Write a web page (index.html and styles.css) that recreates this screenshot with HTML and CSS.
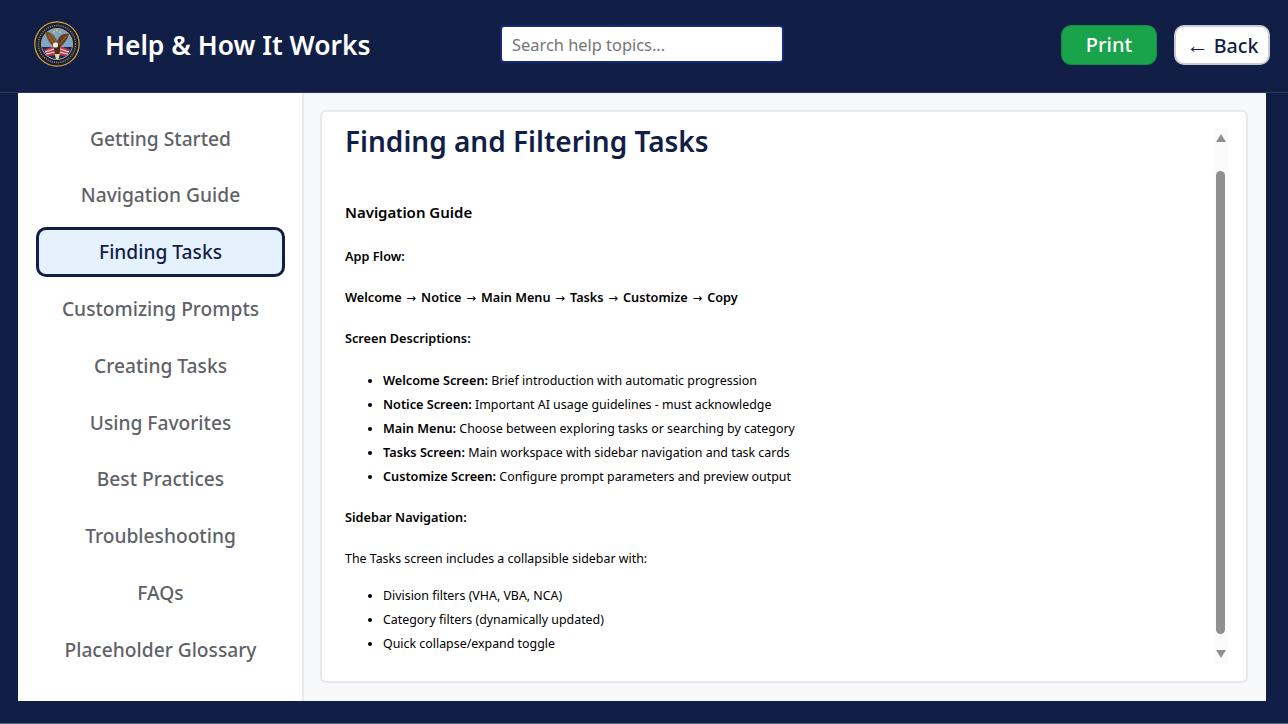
FILE: index.html
```html
<!DOCTYPE html>
<html lang="en">
<head>
    <meta charset="UTF-8">
    <meta name="viewport" content="width=device-width, initial-scale=1.0">
    <title>Help &amp; How It Works</title>
    <link rel="stylesheet" href="styles.css">
</head>
<body>

    <!-- top bar -->
    <header class="topbar">
        <div class="brand">
            <svg class="seal" viewBox="0 0 46 46" width="46" height="46" aria-hidden="true">
                <circle cx="23" cy="23" r="22.8" fill="#d8a62f"/>
                <circle cx="23" cy="23" r="21.6" fill="#1b2036"/>
                <circle cx="23" cy="23" r="18.5" fill="none" stroke="#8b8670" stroke-width="1.4" stroke-dasharray="1.2 1"/>
                <circle cx="23" cy="23" r="16" fill="#c9a24a"/>
                <circle cx="23" cy="23" r="15.4" fill="#7ba6c8"/>
                <!-- lower field -->
                <path d="M8 26 L38 26 A15.400 15.400 0 0 1 8 26Z" fill="#1f2a5c"/>
                <!-- flags -->
                <path d="M10 29 L20 25 L21 34 L14 35Z" fill="#c23b48"/>
                <path d="M11 31 L20 28 M12 33 L21 31" stroke="#eee" stroke-width="1"/>
                <path d="M36 29 L26 25 L25 34 L32 35Z" fill="#c23b48"/>
                <path d="M35 31 L26 28 M34 33 L25 31" stroke="#eee" stroke-width="1"/>
                <!-- wings -->
                <path d="M21 27 C17 24 13 19 11 11 C15 10 20 13 23 20Z" fill="#7a4a26"/>
                <path d="M25 27 C29 24 33 20 35 13 C31 12 26 13 23 20Z" fill="#6a3d1e"/>
                <path d="M14 14 L20 23 M17 13 L22 21 M32 15 L26 23" stroke="#a36f3d" stroke-width="0.8"/>
                <!-- body and head -->
                <path d="M20 24 L26 24 L25.500 33 L21 33Z" fill="#4a2c17"/>
                <circle cx="21.500" cy="24" r="2.600" fill="#f0ece0"/>
                <path d="M20.500 33 L26 33 L24.500 38 L22 38Z" fill="#e6d6a4"/>
                <!-- stars -->
                <circle cx="23" cy="9.500" r="0.900" fill="#e8c544"/>
                <circle cx="20" cy="11" r="0.900" fill="#e8c544"/>
                <circle cx="26" cy="11" r="0.900" fill="#e8c544"/>
            </svg>
            <h1>Help &amp; How It Works</h1>
        </div>
        <input class="search" type="text" placeholder="Search help topics...">
        <div class="actions">
            <button class="btn print-btn" type="button">Print</button>
            <button class="btn back-btn" type="button"><span class="back-arrow">←</span> Back</button>
        </div>
    </header>

    <main class="layout">
        <!-- help topics -->
        <nav class="sidebar">
            <a class="topic" href="#">Getting Started</a>
            <a class="topic" href="#">Navigation Guide</a>
            <a class="topic active" href="#">Finding Tasks</a>
            <a class="topic" href="#">Customizing Prompts</a>
            <a class="topic" href="#">Creating Tasks</a>
            <a class="topic" href="#">Using Favorites</a>
            <a class="topic" href="#">Best Practices</a>
            <a class="topic" href="#">Troubleshooting</a>
            <a class="topic" href="#">FAQs</a>
            <a class="topic" href="#">Placeholder Glossary</a>
        </nav>

        <section class="content">
            <div class="card">
                <div class="article">
                    <h2>Finding and Filtering Tasks</h2>
                    <h3>Navigation Guide</h3>
                    <p><strong>App Flow:</strong></p>
                    <p><strong>Welcome <span class="flow-arrow">→</span> Notice <span class="flow-arrow">→</span> Main Menu <span class="flow-arrow">→</span> Tasks <span class="flow-arrow">→</span> Customize <span class="flow-arrow">→</span> Copy</strong></p>
                    <p><strong>Screen Descriptions:</strong></p>
                    <ul class="screens">
                        <li><strong>Welcome Screen:</strong> Brief introduction with automatic progression</li>
                        <li><strong>Notice Screen:</strong> Important AI usage guidelines - must acknowledge</li>
                        <li><strong>Main Menu:</strong> Choose between exploring tasks or searching by category</li>
                        <li><strong>Tasks Screen:</strong> Main workspace with sidebar navigation and task cards</li>
                        <li><strong>Customize Screen:</strong> Configure prompt parameters and preview output</li>
                    </ul>
                    <p><strong>Sidebar Navigation:</strong></p>
                    <p>The Tasks screen includes a collapsible sidebar with:</p>
                    <ul>
                        <li>Division filters (VHA, VBA, NCA)</li>
                        <li>Category filters (dynamically updated)</li>
                        <li>Quick collapse/expand toggle</li>
                    </ul>
                </div>
                <div class="scrollbar" aria-hidden="true">
                    <span class="scroll-up"></span>
                    <span class="thumb"></span>
                    <span class="scroll-down"></span>
                </div>
            </div>
        </section>
    </main>

</body>
</html>
```

FILE: styles.css
```css
/* General styling */
* {
    box-sizing: border-box;
}

body {
    margin: 0;
    height: 724px;
    overflow: hidden;
    background-color: #111f47;
    font-family: "Noto Sans", "Open Sans", sans-serif;
    border-bottom: 1px solid #5b6684;
}

/* Top bar */
.topbar {
    display: grid;
    grid-template-columns: 466px 284px 1fr;
    align-items: center;
    height: 93px;
    padding: 0 18px 1px 34px;
    border-bottom: 1px solid #2c3858;
}

.brand {
    display: flex;
    align-items: center;
    gap: 25px;
}

.seal {
    display: block;
    margin-top: -4px;
}

.brand h1 {
    margin: 0;
    color: #fff;
    font-size: 26.4px;
    font-weight: 600;
    line-height: 1.2;
}

.search {
    width: 284px;
    height: 38px;
    margin-top: -3px;
    padding: 0 10px;
    border: 2px solid #16297a;
    border-radius: 4px;
    background-color: #fff;
    font-family: inherit;
    font-size: 16.4px;
    outline: none;
}

.search::placeholder {
    color: #757575;
    opacity: 1;
}

.actions {
    display: flex;
    justify-content: flex-end;
    gap: 17px;
    margin-top: -2px;
}

.btn {
    height: 40px;
    border-radius: 10px;
    font-family: inherit;
    font-size: 20px;
    font-weight: 500;
    line-height: 1;
    cursor: pointer;
}

.print-btn {
    width: 96px;
    border: 1px solid #178a45;
    background-color: #19a44c;
    color: #fff;
}

.back-btn {
    width: 96px;
    padding: 2px 0 0;
    border: 2px solid #c9ccd4;
    background-color: #fff;
    color: #111f47;
    font-size: 19.6px;
}

.back-arrow {
    font-family: "Liberation Serif", serif;
    font-size: 23px;
    font-weight: 400;
    line-height: 1;
}

/* Main area */
.layout {
    display: flex;
    height: 608px;
    margin: 0 22px 0 18px;
    background-color: #f6f8fa;
}

.sidebar {
    display: flex;
    flex-direction: column;
    gap: 6.8px;
    flex: 0 0 286px;
    padding: 20.2px 17px 0 18px;
    background-color: #fff;
    border-right: 2px solid #e7e9ed;
}

.topic {
    display: flex;
    align-items: center;
    justify-content: center;
    height: 50px;
    flex: 0 0 50px;
    border: 3px solid transparent;
    border-radius: 10px;
    color: #5f6268;
    font-size: 19.2px;
    font-weight: 500;
    text-decoration: none;
}

.topic.active {
    border-color: #111f47;
    background-color: #e5f1fd;
    color: #111f47;
}

.content {
    flex: 1;
    padding: 17px 18px 18px 16px;
}

/* Card with the article */
.card {
    display: flex;
    height: 573px;
    padding: 0 18px 19px 23px;
    background-color: #fff;
    border: 2px solid #e7e9ed;
    border-radius: 6px;
    overflow: hidden;
}

.article {
    flex: 1;
    color: #000;
    font-size: 12.4px;
    line-height: 18px;
    overflow: hidden;
}

.article h2 {
    margin: 10px 0 0;
    color: #111f47;
    font-size: 28px;
    font-weight: 600;
    line-height: 38px;
}

.article h3 {
    margin: 41px 0 0;
    font-size: 15px;
    font-weight: 600;
    line-height: 22px;
}

.article p {
    margin: 23px 0 0;
}

.article h3 + p {
    margin-top: 25px;
}

.article strong {
    font-size: 12.7px;
    font-weight: 600;
    line-height: 1;
}

.flow-arrow {
    margin: 0 1.6px;
    font-family: "DejaVu Sans", sans-serif;
    font-size: 11.5px;
    font-weight: 400;
    line-height: 1;
}

.article ul {
    margin: 19px 0 0;
    padding-left: 38px;
}

.article ul.screens {
    margin-top: 24px;
}

.article li {
    margin-bottom: 6px;
}

/* Scrollbar */
.scrollbar {
    display: flex;
    flex-direction: column;
    align-items: center;
    flex: 0 0 15px;
    height: 534px;
    margin-top: 17px;
    background-color: #fbfbfb;
}

.scroll-up,
.scroll-down {
    width: 0;
    height: 0;
    border-left: 5.5px solid transparent;
    border-right: 5.5px solid transparent;
}

.scroll-up {
    margin-top: 5px;
    border-bottom: 8px solid #8f8f8f;
}

.scroll-down {
    margin-top: 16px;
    border-top: 8px solid #8f8f8f;
}

.thumb {
    width: 9px;
    height: 463px;
    margin-top: 29px;
    border-radius: 5px;
    background-color: #8f8f8f;
}
```
